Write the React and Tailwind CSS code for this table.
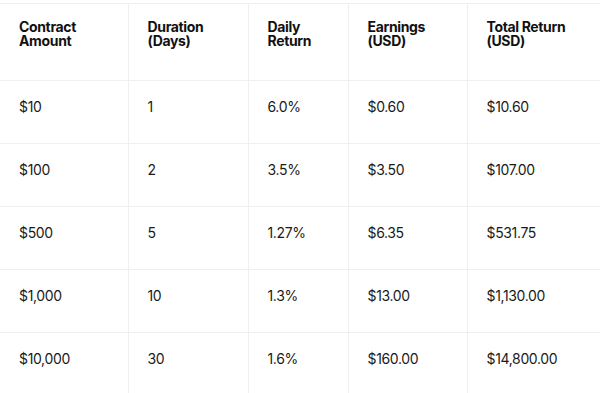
import React from 'react'

const rows = [
  ['$10', '1', '6.0%', '$0.60', '$10.60'],
  ['$100', '2', '3.5%', '$3.50', '$107.00'],
  ['$500', '5', '1.27%', '$6.35', '$531.75'],
  ['$1,000', '10', '1.3%', '$13.00', '$1,130.00'],
  ['$10,000', '30', '1.6%', '$160.00', '$14,800.00'],
]

const headers = [
  ['Contract', 'Amount'],
  ['Duration', '(Days)'],
  ['Daily', 'Return'],
  ['Earnings', '(USD)'],
  ['Total Return', '(USD)'],
]

export default function App() {
  return (
    <div className="w-[600px] h-[393px] overflow-hidden bg-white pt-[3px]" style={{ fontFamily: 'Inter, "Noto Sans", sans-serif' }}>
      <table className="w-[600px] table-fixed border-collapse">
        <colgroup>
          <col className="w-[128px]" />
          <col className="w-[120px]" />
          <col className="w-[100px]" />
          <col className="w-[119px]" />
          <col className="w-[133px]" />
        </colgroup>
        <thead>
          <tr className="h-[77px] border-t border-b border-[#efefef]">
            {headers.map((h, i) => (
              <th
                key={i}
                className={`align-top text-left pt-4 pl-[19px] text-sm leading-[14px] font-bold tracking-tight text-[#111111] ${i > 0 ? 'border-l border-[#efefef]' : ''}`}
              >
                {h[0]}
                <br />
                {h[1]}
              </th>
            ))}
          </tr>
        </thead>
        <tbody>
          {rows.map((r, ri) => (
            <tr key={ri} className="h-[63px] border-b border-[#efefef]">
              {r.map((c, ci) => (
                <td
                  key={ci}
                  className={`align-top pt-4 pl-[19px] text-sm leading-5 tracking-tight text-[#1a1a1a] ${ci > 0 ? 'border-l border-[#efefef]' : ''}`}
                >
                  {c}
                </td>
              ))}
            </tr>
          ))}
        </tbody>
      </table>
    </div>
  )
}
